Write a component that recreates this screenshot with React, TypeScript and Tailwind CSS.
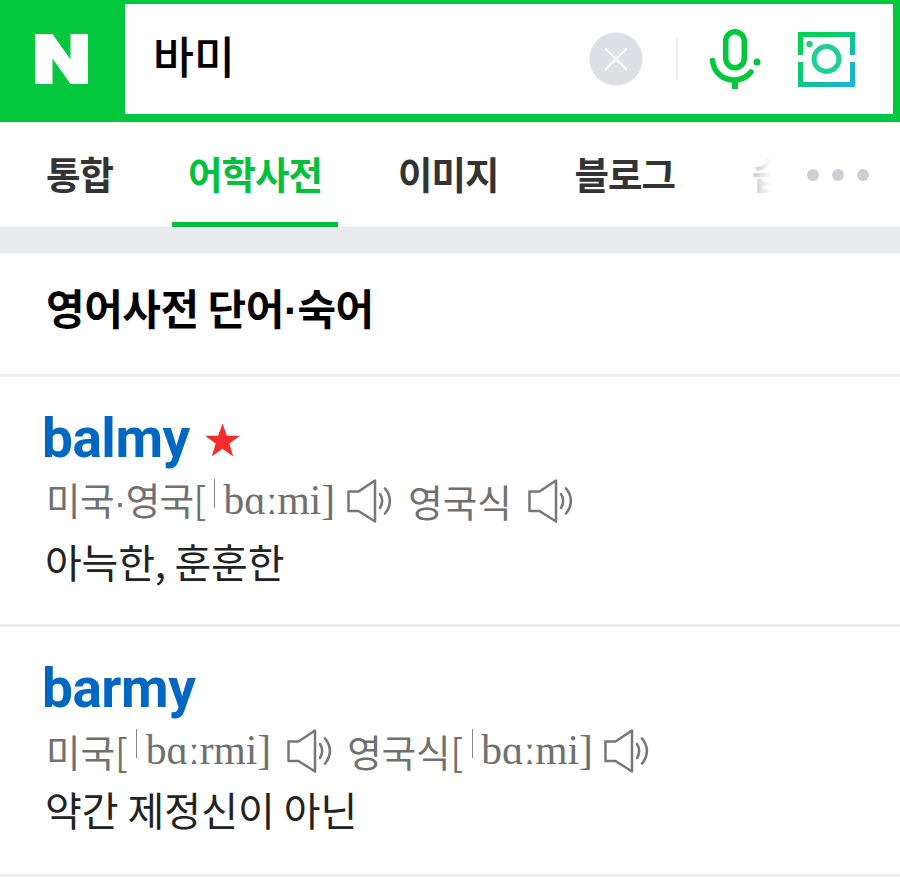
import { type ReactNode } from 'react'

const kr = "font-['Noto_Sans_CJK_KR','Noto_Sans',sans-serif]"

function Speaker() {
  return (
    <svg width="45" height="44" viewBox="0 0 45 44" fill="none" stroke="#777" className="shrink-0">
      <path d="M1.500 12.500h10L28 1.500V42.500L11.500 32H1.500z" strokeWidth="2.500" strokeLinejoin="round" />
      <path d="M33 15c2.800 4 2.800 10 0 14" strokeWidth="2.600" strokeLinecap="round" />
      <path d="M38 9.500c6.500 7.500 6.500 17.500 0 25" strokeWidth="2.600" strokeLinecap="round" />
    </svg>
  )
}

// 강세 표시
function Stress() {
  return (
    <span className="w-[18px] shrink-0 flex justify-center -mt-[16px]">
      <span className="w-[1.5px] h-[29px] bg-[#888]" />
    </span>
  )
}

function Ipa({ children }: { children: ReactNode }) {
  return <span className="font-['Liberation_Serif',serif] text-[41.500px] leading-none">{children}</span>
}

function Dot() {
  return <span className="font-['Liberation_Sans',sans-serif]">·</span>
}

function Tab({ label, active }: { label: string; active?: boolean }) {
  return (
    <div
      className={`h-full flex items-center justify-center shrink-0 pb-[3px] text-[37.500px] font-bold tracking-[-1px] ${
        active ? 'text-[#03c03c] border-b-[5px] border-[#03c03c] px-4 pt-[5px]' : 'text-[#333]'
      }`}
    >
      {label}
    </div>
  )
}

export default function App() {
  return (
    <div className={`w-[900px] h-[877px] bg-white overflow-hidden ${kr}`}>
      {/* 검색창 */}
      <div className="h-[122px] bg-[#03c73c] flex pt-[4px] pr-[7px] pb-[8px]">
        <div className="w-[125px] shrink-0 flex items-center justify-center pr-[2px]">
          <svg width="53" height="50" viewBox="0 0 53 50">
            <path d="M0 0h17.500l18 25.500V0H53v50H35.500l-18-25.500V50H0z" fill="#fff" />
          </svg>
        </div>
        <div className="flex-1 bg-white flex items-center pl-[28px]">
          <span className="text-[44.500px] leading-none text-black font-medium -mt-[8px]">바미</span>
          <div className="ml-auto flex items-center pr-[38px]">
            <svg width="54" height="54" viewBox="0 0 54 54">
              <circle cx="27" cy="27" r="26.500" fill="#dcdfe3" />
              <path d="M17 17l20 20M37 17L17 37" stroke="#fff" strokeWidth="2" strokeLinecap="round" />
            </svg>
            <div className="w-[2px] h-[42px] bg-[#eceef0] ml-[33px]" />
            <svg width="52" height="60" viewBox="0 0 52 60" className="ml-[31px]" fill="none" stroke="#03c73c">
              <rect x="16.750" y="2.750" width="18.500" height="36" rx="9.250" strokeWidth="5.500" />
              <path d="M3.500 31.500C5 44 14 51 25 51c7 0 13-3 17-8" strokeWidth="5.500" strokeLinecap="round" />
              <path d="M26 51v9" strokeWidth="6" />
              <circle cx="48" cy="33" r="3.500" fill="#03c73c" stroke="none" />
            </svg>
            <svg width="57" height="55" viewBox="0 0 57 55" className="ml-[37px]" fill="none">
              <defs>
                <linearGradient id="cam" x1="0" y1="0" x2="1" y2="1">
                  <stop offset="0.25" stopColor="#03d255" />
                  <stop offset="1" stopColor="#1eaee8" />
                </linearGradient>
              </defs>
              <path d="M0 0h57v23h-5V5H5v18H0zM0 30h5v20h47V30h5v25H0z" fill="url(#cam)" />
              <circle cx="28.500" cy="27" r="12.500" stroke="#1fcf9a" strokeWidth="5" />
              <circle cx="11.500" cy="12" r="3.200" fill="#1fcf7a" />
            </svg>
          </div>
        </div>
      </div>

      {/* 탭 */}
      <div className="relative h-[106px] border-b border-[#e4e6e8] flex overflow-hidden pl-[46px]">
        <Tab label="통합" />
        <div className="ml-[59px]"><Tab label="어학사전" active /></div>
        <div className="ml-[60px]"><Tab label="이미지" /></div>
        <div className="ml-[76px]"><Tab label="블로그" /></div>
        <div className="ml-[77px]"><Tab label="습관" /></div>
        <div className="absolute right-0 top-0 h-full w-[150px] flex items-center gap-[13px] pl-[57px] bg-gradient-to-r from-white/70 to-white to-[14%]">
          <span className="w-[12px] h-[12px] rounded-full bg-[#cdcfd4]" />
          <span className="w-[12px] h-[12px] rounded-full bg-[#cdcfd4]" />
          <span className="w-[12px] h-[12px] rounded-full bg-[#cdcfd4]" />
        </div>
      </div>
      <div className="h-[25px] bg-[#e8ebee] border-b border-[#e0e3e6]" />

      {/* 제목 */}
      <div className="h-[124px] pl-[46px] flex items-center border-b-[3px] border-[#eeeeee]">
        <h2 className="text-[42px] font-bold text-black tracking-[-0.5px] -mt-[10px]">
          영어사전 단어<Dot />숙어
        </h2>
      </div>

      {/* 단어 */}
      <div className="h-[250px] pl-[42px] pt-[30px] border-b-[3px] border-[#eeeeee]">
        <div className="flex items-center h-[62px]">
          <span className="font-['Roboto',sans-serif] font-bold text-[55px] leading-none text-[#0068c3] tracking-[-0.5px]">balmy</span>
          <svg width="35" height="34" viewBox="0 0 36 34" className="ml-[15px] mt-[3px]">
            <path d="M18 0l4.500 12.500H36L25 20.500 29 34 18 26 7 34l4-13.500L0 12.500h13.500z" fill="#f62b2b" />
          </svg>
        </div>
        <div className="flex items-center h-[50px] mt-[7px] pl-[4px] text-[#707070] text-[37.500px]">
          <span className="tracking-[-0.6px]">미국<Dot />영국[</span>
          <Stress />
          <Ipa>bɑːmi]</Ipa>
          <span className="ml-[12px]"><Speaker /></span>
          <span className="ml-[16px]">영국식</span>
          <span className="ml-[16px]"><Speaker /></span>
        </div>
        <div className="text-[40px] leading-[60px] mt-[5px] pl-[3px] text-[#222] tracking-[-0.2px]">아늑한, 훈훈한</div>
      </div>

      <div className="h-[250px] pl-[42px] pt-[30px] border-b-[3px] border-[#eeeeee]">
        <div className="flex items-center h-[62px]">
          <span className="font-['Roboto',sans-serif] font-bold text-[55px] leading-none text-[#0068c3] tracking-[-0.5px]">barmy</span>
        </div>
        <div className="flex items-center h-[50px] mt-[7px] pl-[4px] text-[#707070] text-[37.500px]">
          <span>미국[</span>
          <Stress />
          <Ipa>bɑːrmi]</Ipa>
          <span className="ml-[16px]"><Speaker /></span>
          <span className="ml-[15px]">영국식[</span>
          <Stress />
          <Ipa>bɑːmi]</Ipa>
          <span className="ml-[11px]"><Speaker /></span>
        </div>
        <div className="text-[40px] leading-[60px] mt-[3px] pl-[3px] text-[#222]">약간 제정신이 아닌</div>
      </div>
    </div>
  )
}
